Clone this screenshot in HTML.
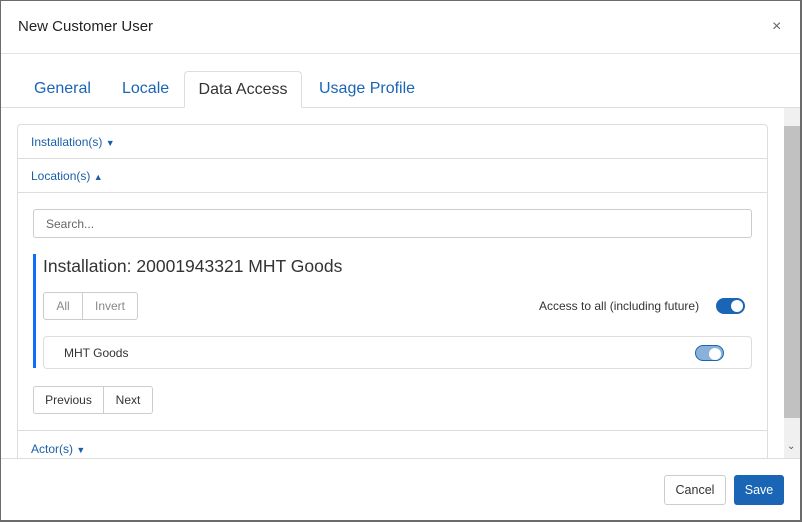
<!DOCTYPE html>
<html><head><style>
*{box-sizing:border-box;margin:0;padding:0}
body{width:802px;height:522px;background:#fff;font-family:"Liberation Sans",sans-serif;position:relative;overflow:hidden;color:#222}
.abs{position:absolute}
.frame{left:0;top:0;width:802px;height:522px;border:1px solid #6b6b6b;border-right:2px solid #6b6b6b;border-bottom:2px solid #6b6b6b}
.tab{top:71px;height:37px;font-size:16px;line-height:36px;color:#1a65b5}
.sec{left:17px;width:751px;border-top:1px solid #ddd;font-size:12px;color:#1a5fa8;padding-left:14px}
.tog{border-radius:8px;width:29px;height:16px}
.tog::after{content:"";position:absolute;right:2px;top:2px;width:12px;height:12px;border-radius:50%;background:#fff}
.btn{border:1px solid #ccc;border-radius:3px;font-size:12px;text-align:center}
</style></head><body>
<div class="abs" style="left:18px;top:18px;font-size:15px;color:#222">New Customer User</div>
<div class="abs" style="left:772px;top:18px;font-size:16px;color:#666">×</div>
<div class="abs" style="left:0;top:53px;width:802px;height:1px;background:#e3e3e3"></div>
<div class="abs" style="left:0;top:107px;width:802px;height:1px;background:#ddd"></div>
<div class="abs tab" style="left:34px">General</div>
<div class="abs tab" style="left:122px">Locale</div>
<div class="abs tab" style="left:184px;width:118px;border:1px solid #ddd;border-bottom:1px solid #fff;border-radius:4px 4px 0 0;background:#fff;color:#333;text-align:center;line-height:36px">Data Access</div>
<div class="abs tab" style="left:319px">Usage Profile</div>
<div class="abs" style="left:17px;top:124px;width:751px;height:340px;border:1px solid #ddd;border-radius:4px"></div>
<div class="abs sec" style="top:125px;border-top:none;height:33px;line-height:34px">Installation(s) <span style="font-size:9px">▼</span></div>
<div class="abs sec" style="top:158px;height:34px;line-height:34px">Location(s) <span style="font-size:9px">▲</span></div>
<div class="abs sec" style="top:192px;height:1px;padding:0"></div>
<div class="abs" style="left:33px;top:209px;width:719px;height:29px;border:1px solid #ccc;border-radius:3px;font-size:12px;color:#666;padding:7px 12px">Search...</div>
<div class="abs" style="left:33px;top:254px;width:3px;height:114px;background:#0d6efd"></div>
<div class="abs" style="left:43px;top:256px;font-size:17.5px;color:#333">Installation: 20001943321 MHT Goods</div>
<div class="abs btn" style="left:43px;top:292px;width:40px;height:28px;line-height:26px;color:#888;border-radius:3px 0 0 3px">All</div>
<div class="abs btn" style="left:82px;top:292px;width:56px;height:28px;line-height:26px;color:#888;border-radius:0 3px 3px 0">Invert</div>
<div class="abs" style="left:539px;top:299px;font-size:12px;color:#333">Access to all (including future)</div>
<div class="abs tog" style="left:716px;top:298px;background:#1a65b5"></div>
<div class="abs" style="left:43px;top:336px;width:709px;height:33px;border:1px solid #ddd;border-radius:4px"></div>
<div class="abs" style="left:64px;top:346px;font-size:12px;color:#333">MHT Goods</div>
<div class="abs tog" style="left:695px;top:345px;background:#8ab1da;border:1px solid #1a65b5"></div>
<div class="abs btn" style="left:33px;top:386px;width:71px;height:28px;line-height:26px;color:#333;border-radius:3px 0 0 3px">Previous</div>
<div class="abs btn" style="left:103px;top:386px;width:50px;height:28px;line-height:26px;color:#333;border-radius:0 3px 3px 0">Next</div>
<div class="abs sec" style="top:430px;height:30px;line-height:36px">Actor(s) <span style="font-size:9px">▼</span></div>
<div class="abs" style="left:784px;top:108px;width:16px;height:350px;background:#f0f0f0"></div>
<div class="abs" style="left:784px;top:126px;width:16px;height:292px;background:#c1c1c1"></div>
<div class="abs" style="left:787px;top:441px;font-size:10px;color:#555">⌄</div>
<div class="abs" style="left:0;top:458px;width:802px;height:64px;background:#fff;border-top:1px solid #ddd"></div>
<div class="abs btn" style="left:664px;top:475px;width:62px;height:30px;line-height:28px;color:#333;font-size:12.5px">Cancel</div>
<div class="abs btn" style="left:734px;top:475px;width:50px;height:30px;line-height:28px;color:#fff;background:#1a65b5;border-color:#1a65b5;font-size:12.5px">Save</div>
<div class="abs frame"></div>
</body></html>
